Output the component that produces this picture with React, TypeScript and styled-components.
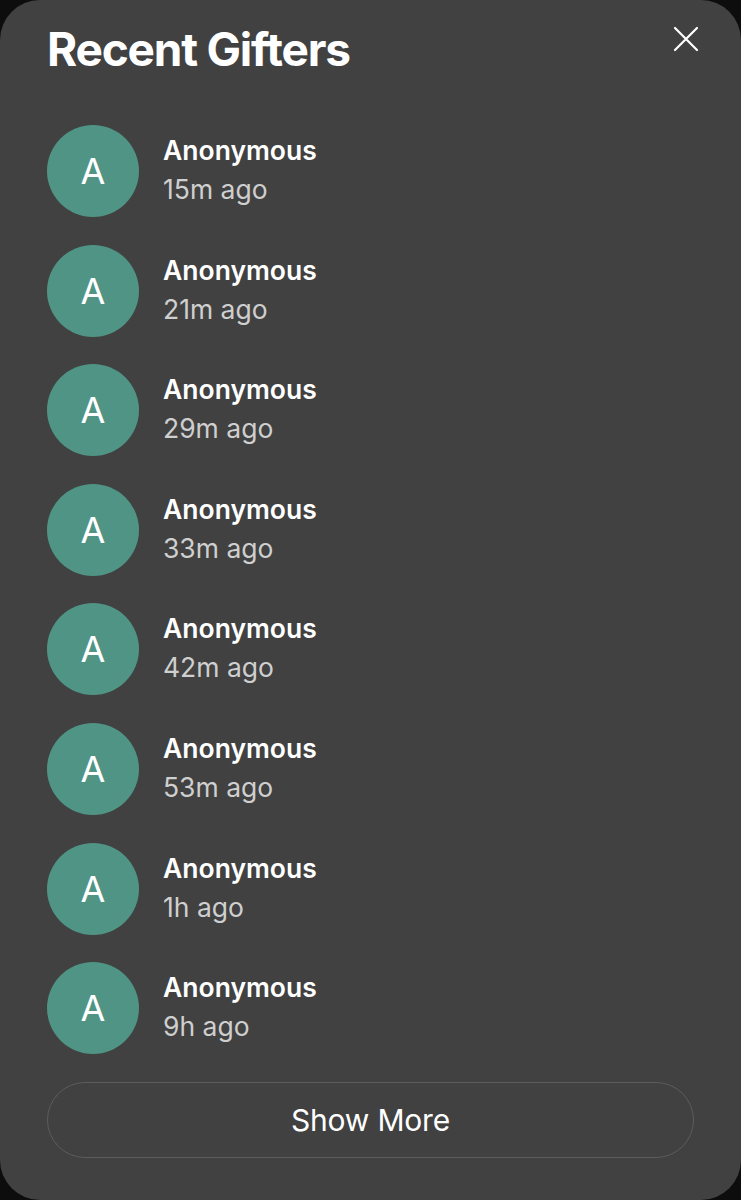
import React from 'react';
import styled, { createGlobalStyle } from 'styled-components';

const GlobalStyle = createGlobalStyle`
  html, body {
    margin: 0;
    padding: 0;
    background: #0d0d0d;
  }
  body {
    font-family: Inter, "Noto Sans", "Liberation Sans", sans-serif;
    -webkit-font-smoothing: antialiased;
  }
`;

const Panel = styled.div`
  width: 741px;
  height: 1200px;
  box-sizing: border-box;
  background: #414141;
  border-radius: 40px;
  padding: 0 47px;
  display: flex;
  flex-direction: column;
`;

const Header = styled.div`
  display: flex;
  justify-content: space-between;
  align-items: flex-start;
  padding-top: 23px;
  height: 125px;
  box-sizing: border-box;
`;

const Title = styled.h1`
  margin: 0;
  font-size: 46px;
  line-height: 52px;
  font-weight: 700;
  letter-spacing: -1.2px;
  color: #ffffff;
`;

const CloseButton = styled.button`
  background: none;
  border: none;
  padding: 0;
  margin: 2px -6px 0 0;
  width: 28px;
  height: 28px;
  color: #ffffff;
  cursor: pointer;
  display: flex;
  align-items: center;
  justify-content: center;
`;

const List = styled.ul`
  list-style: none;
  margin: 0;
  padding: 0;
  display: flex;
  flex-direction: column;
  gap: 27.6px;
`;

const Row = styled.li`
  display: flex;
  align-items: flex-start;
  gap: 24px;
`;

const Avatar = styled.div`
  width: 92px;
  height: 92px;
  border-radius: 50%;
  background: #4f9484;
  color: #ffffff;
  display: flex;
  align-items: center;
  justify-content: center;
  font-size: 36px;
  font-weight: 400;
  flex-shrink: 0;
`;

const Info = styled.div`
  display: flex;
  flex-direction: column;
  padding-top: 6px;
`;

const Name = styled.div`
  font-size: 26.5px;
  line-height: 38px;
  font-weight: 600;
  color: #ffffff;
`;

const Time = styled.div`
  font-size: 26.5px;
  line-height: 41px;
  font-weight: 400;
  color: #cfcfcf;
`;

const ShowMore = styled.button`
  margin-top: 28px;
  height: 76px;
  width: 100%;
  border-radius: 38px;
  border: 1.5px solid #5c5c5c;
  background: transparent;
  color: #ffffff;
  font-family: inherit;
  font-size: 30px;
  font-weight: 400;
  letter-spacing: -0.2px;
  cursor: pointer;
`;

const gifters = ['15m ago', '21m ago', '29m ago', '33m ago', '42m ago', '53m ago', '1h ago', '9h ago'];

const App: React.FC = () => {
  return (
    <>
      <GlobalStyle />
      <Panel>
        <Header>
          <Title>Recent Gifters</Title>
          <CloseButton aria-label="Close">
            <svg width="26" height="26" viewBox="0 0 26 26" fill="none" stroke="currentColor" strokeWidth="2.2" strokeLinecap="round">
              <path d="M2 2L24 24M24 2L2 24" />
            </svg>
          </CloseButton>
        </Header>
        <List>
          {gifters.map((t, i) => (
            <Row key={i}>
              <Avatar>A</Avatar>
              <Info>
                <Name>Anonymous</Name>
                <Time>{t}</Time>
              </Info>
            </Row>
          ))}
        </List>
        <ShowMore>Show More</ShowMore>
      </Panel>
    </>
  );
};

export default App;
